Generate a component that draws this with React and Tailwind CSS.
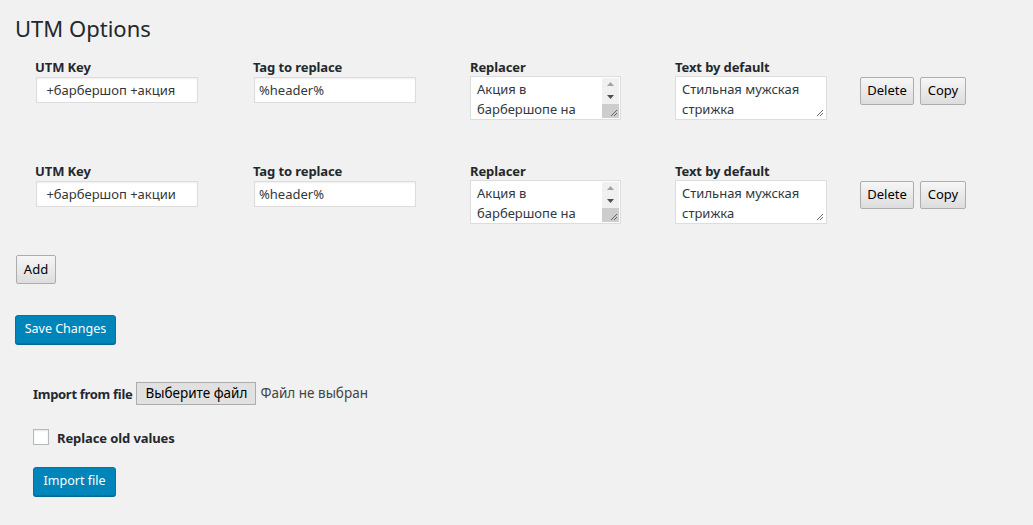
import React from "react";

const rows = [
  { key: " +барбершоп +акция", tag: "%header%", replacer: "Акция в барбершопе на", def: "Стильная мужская стрижка" },
  { key: " +барбершоп +акции", tag: "%header%", replacer: "Акция в барбершопе на", def: "Стильная мужская стрижка" },
];

const font = { fontFamily: '"Noto Sans", "Open Sans", sans-serif' };

const labelCls = "text-[13px] font-bold text-[#23282d] leading-[20px] tracking-[-0.1px]";

const NativeButton = ({ children, className = "" }) => (
  <button
    type="button"
    className={
      "h-[28px] text-[13px] text-black border border-[#adadad] rounded-[2px] bg-gradient-to-b from-[#f6f6f6] to-[#dddddd] " +
      className
    }
  >
    {children}
  </button>
);

const Scrollbar = () => (
  <div className="absolute right-px top-px bottom-px w-[17px] bg-[#f0f0f0] flex flex-col items-center">
    <svg width="17" height="13" viewBox="0 0 17 13">
      <path d="M5 8 L8.5 4 L12 8 Z" fill="#a3a3a3" />
    </svg>
    <svg width="17" height="13" viewBox="0 0 17 13">
      <path d="M5 4 L8.5 8 L12 4 Z" fill="#505050" />
    </svg>
    <div className="relative flex-1 w-full bg-[#cdcdcd]">
      <svg className="absolute right-[1px] bottom-[1px]" width="9" height="9" viewBox="0 0 9 9">
        <path d="M8 2 L2 8 M8 5 L5 8" stroke="#666" strokeWidth="1" />
      </svg>
    </div>
  </div>
);

const Grip = () => (
  <svg className="absolute right-[2px] bottom-[2px]" width="9" height="9" viewBox="0 0 9 9">
    <path d="M8 2 L2 8 M8 5 L5 8" stroke="#666" strokeWidth="1" />
  </svg>
);

const Row = ({ row }) => (
  <div className="flex items-start">
    <div className="w-[238px] pl-[20px]">
      <div className={labelCls}>UTM Key</div>
      <input
        readOnly
        value={row.key}
        className="ml-px w-[162px] h-[26px] px-[6px] text-[13px] text-[#32373c] bg-white border border-[#ddd] shadow-[inset_0_1px_2px_rgba(0,0,0,0.07)] outline-none"
      />
    </div>
    <div className="w-[217px]">
      <div className={labelCls}>Tag to replace</div>
      <input
        readOnly
        value={row.tag}
        className="ml-px w-[162px] h-[26px] px-[4px] text-[13px] text-[#32373c] bg-white border border-[#ddd] shadow-[inset_0_1px_2px_rgba(0,0,0,0.07)] outline-none"
      />
    </div>
    <div className="w-[205px]">
      <div className={labelCls + " -mb-px"}>Replacer</div>
      <div className="relative w-[151px] h-[44px] bg-white border border-[#ddd] overflow-hidden">
        <div className="pl-[6px] pr-[20px] pt-[2px] text-[13px] leading-[20px] text-[#32373c]">{row.replacer}</div>
        <Scrollbar />
      </div>
    </div>
    <div className="w-[185px]">
      <div className={labelCls + " -mb-px"}>Text by default</div>
      <div className="relative w-[152px] h-[44px] bg-white border border-[#ddd] overflow-hidden">
        <div className="pl-[6px] pr-[6px] pt-[2px] text-[13px] leading-[20px] text-[#32373c]">{row.def}</div>
        <Grip />
      </div>
    </div>
    <div className="flex gap-[6px] pt-[20px]">
      <NativeButton className="w-[54px]">Delete</NativeButton>
      <NativeButton className="w-[46px]">Copy</NativeButton>
    </div>
  </div>
);

export default function App() {
  return (
    <div className="min-h-[525px] bg-[#f1f1f1] pl-[15px] pt-[14px]" style={font}>
      <h1 className="text-[22px] leading-[29px] text-[#23282d] font-normal">UTM Options</h1>
      <div className="mt-[14px] flex flex-col gap-[41px]">
        {rows.map((r, i) => (
          <Row key={i} row={r} />
        ))}
      </div>
      <div className="mt-[31px] flex">
        <button
          type="button"
          className="ml-px h-[29px] w-[40px] text-[13px] text-black border border-[#adadad] rounded-[2px] bg-gradient-to-b from-[#f6f6f6] to-[#dddddd]"
        >
          Add
        </button>
      </div>
      <div className="mt-[31px] flex">
        <button
          type="button"
          className="h-[29px] w-[101px] text-[12.5px] text-white bg-[#0085ba] border border-[#0073aa] rounded-[3px] shadow-[0_1px_0_#006799]"
        >
          Save Changes
        </button>
      </div>
      <div className="pl-[18px] mt-[38px]">
        <div className="flex items-center h-[23px]">
          <span className="text-[13px] font-bold text-[#23282d] tracking-[-0.3px] mr-[4px] pt-[2px]">Import from file</span>
          <button
            type="button"
            className="h-[23px] w-[120px] text-[13.5px] text-black bg-[#e1e1e1] border border-[#adadad]"
          >
            Выберите файл
          </button>
          <span className="ml-[4px] text-[13.5px] text-[#444]">Файл не выбран</span>
        </div>
        <label className="mt-[22px] flex items-center gap-[8px] h-[20px]">
          <span className="w-[16px] h-[16px] bg-white border border-[#b4b9be] shadow-[inset_0_1px_2px_rgba(0,0,0,0.1)]" />
          <span className="text-[13px] font-bold text-[#23282d] tracking-[-0.1px] pt-[3px]">Replace old values</span>
        </label>
        <button
          type="button"
          className="mt-[20px] h-[29px] w-[83px] text-[12.5px] text-white bg-[#0085ba] border border-[#0073aa] rounded-[3px] shadow-[0_1px_0_#006799]"
        >
          Import file
        </button>
      </div>
    </div>
  );
}
